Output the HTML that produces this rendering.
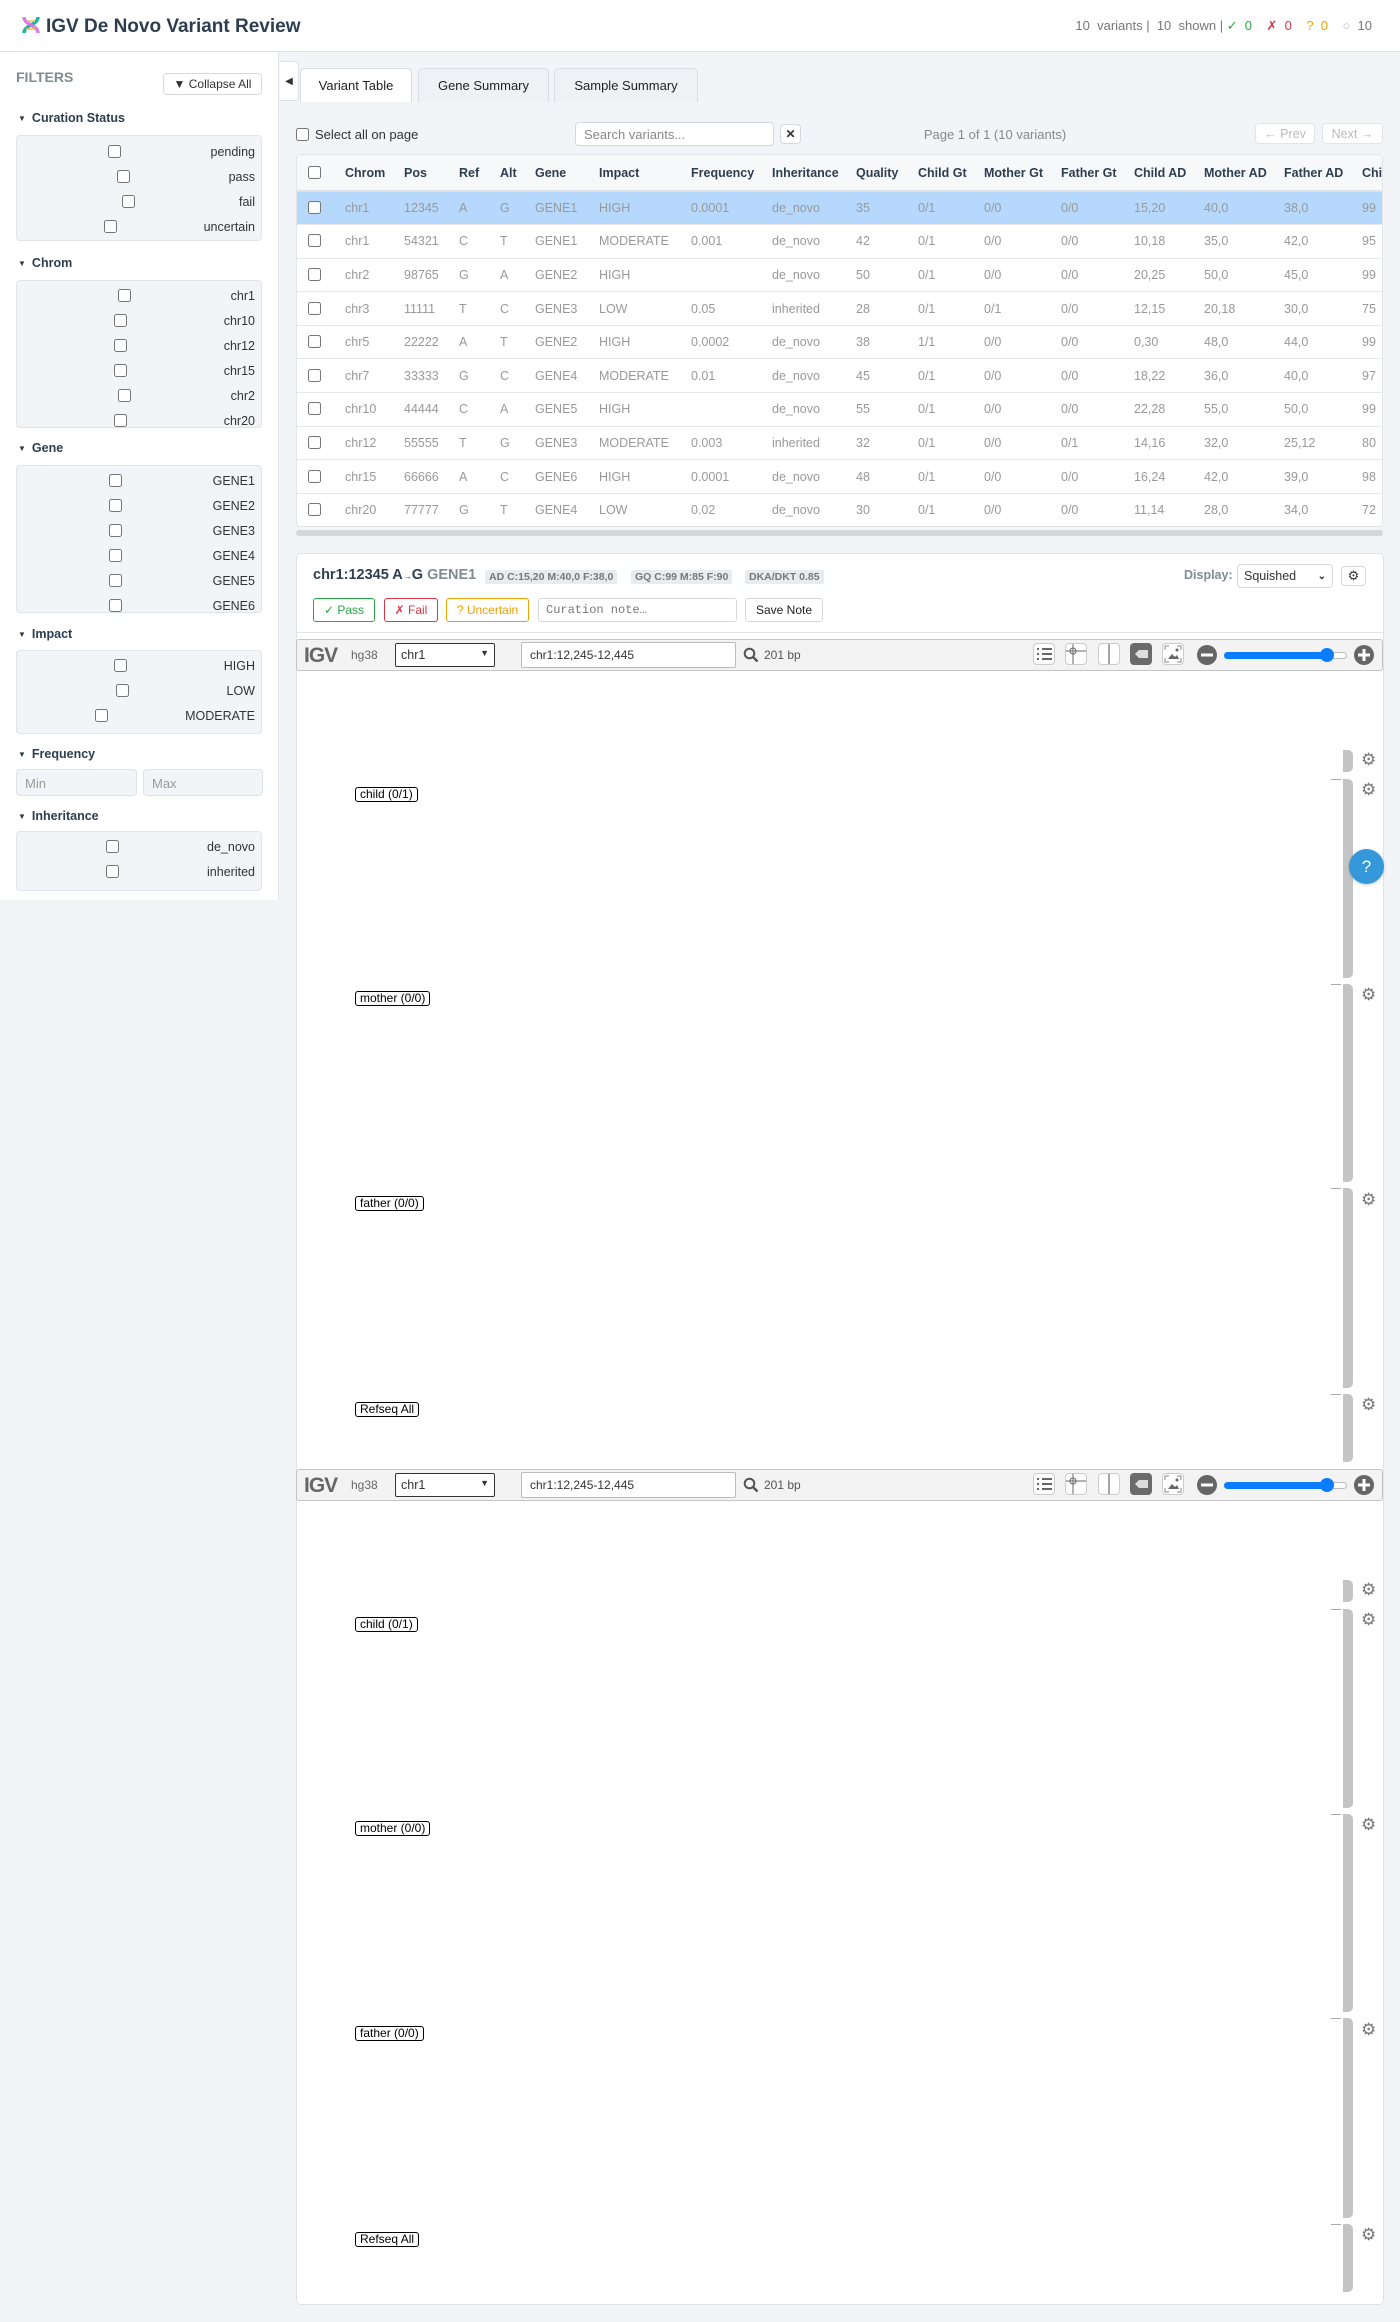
<!DOCTYPE html>
<html><head><meta charset="utf-8">
<style>
*{box-sizing:border-box}
body{margin:0;width:1400px;height:2322px;background:#f3f4f8;font-family:"Liberation Sans",Arial,sans-serif;color:#333;position:relative;overflow:hidden}
.abs{position:absolute}
#hdr{left:0;top:0;width:1400px;height:52px;background:#fff;border-bottom:1px solid #dde0e6}
#side{left:0;top:52px;width:279px;height:848px;background:#fff;border-right:1px solid #e2e4ea}
.h3{font-size:12.5px;font-weight:bold;color:#2c3e50;left:18px}
.h3:before{content:"▼";font-size:8px;margin-right:6px;position:relative;top:-1px}
.box{left:16px;width:246px;background:#f3f4f8;border:1px solid #e0e3e8;border-radius:4px;overflow:hidden}
.row{position:absolute;left:1px;right:6px;height:25px;display:flex;align-items:center;font-size:12.5px;color:#333}
.row input{margin:0 auto;width:13px;height:13px}
.inp{background:#f3f4f8;border:1px solid #dfe2e7;border-radius:4px;font-size:13px;color:#999;padding:6px 8px;height:27px}
.btn{background:#fff;border:1px solid #d5d8de;border-radius:4px;font-size:12.5px;display:flex;align-items:center;justify-content:center}
.tab{top:68px;height:34px;background:#f0f1f4;border:1px solid #d9dce2;border-bottom:none;border-radius:5px 5px 0 0;font-size:13px;color:#222;display:flex;align-items:center;justify-content:center}
table{border-collapse:collapse;table-layout:fixed;width:1145px;font-size:12.5px}
th{height:36px;text-align:left;font-weight:bold;color:#2c3e50;padding:0;background:#f7f8fa;border-bottom:2px solid #e0e2e6;white-space:nowrap}
td{height:33.6px;padding:0;color:#999;border-bottom:1px solid #e6e7ea;white-space:nowrap}
td input,th input{margin:0 0 0 11px;width:13px;height:13px;vertical-align:-2px}
tr.sel td{background:#b6d8fc}
.badge{top:570px;height:14px;background:#e9ecef;color:#777;font-size:10.5px;font-weight:bold;padding:0 4px;line-height:14px;border-radius:2px}
.cbtn{top:598px;height:24px;border-radius:3px;background:#fff;font-size:12px;display:flex;align-items:center;justify-content:center;border:1px solid}
.tb{height:32px;left:296px;width:1087px;background:#f3f3f3;border:1px solid #c4c4c4;border-radius:3px}
.ic{width:22px;height:22px;top:4px;border:1px solid #ccc;border-radius:4px;background:#fff}
.lbl{font-size:12px;color:#000;background:#fff;border:1px solid #000;border-radius:3px;padding:0 4px;line-height:13px;left:355px}
.bar{left:1343px;width:10px;background:#c4c4c4;border-radius:0 5px 5px 0}
.tick{left:1331px;width:10px;height:1px;background:#aaa}
.gear{left:1361px;font-size:17px;color:#777;line-height:17px}
</style></head><body>

<div id="hdr" class="abs">
  <svg class="abs" style="left:21px;top:15px" width="20" height="20" viewBox="0 0 20 20">
    <path d="M3 18 C3 10 17 10 17 2" stroke="#1fb5a8" stroke-width="3.5" fill="none"/>
    <path d="M3 2 C3 10 17 10 17 18" stroke="#d772e0" stroke-width="3.5" fill="none" opacity=".9"/>
    <path d="M6 6h8M5 14h9" stroke="#f3c34a" stroke-width="1.5"/>
  </svg>
  <div class="abs" style="left:46px;top:16px;font-size:19px;font-weight:bold;color:#2c3e50">IGV De Novo Variant Review</div>
  <div class="abs" style="right:28px;top:18px;font-size:13px;color:#777;white-space:pre">10  variants |  10  shown | <span style="color:#28a745">✓  0</span>    <span style="color:#dc3545">✗  0</span>    <span style="color:#f0a000">?  0</span>    <span style="color:#bbb">○</span>  10</div>
</div>

<div id="side" class="abs">
  <div class="abs" style="left:16px;top:17px;font-size:14px;font-weight:bold;color:#7f8c8d">FILTERS</div>
  <div class="abs btn" style="left:163px;top:21px;width:99px;height:22px;font-size:12px">▼ Collapse All</div>
</div>
<div class="abs h3" style="top:111px">Curation Status</div>
<div class="abs box" style="top:135px;height:106px">
  <div class="row" style="top:3px"><input type="checkbox"><span>pending</span></div>
  <div class="row" style="top:28px"><input type="checkbox"><span>pass</span></div>
  <div class="row" style="top:53px"><input type="checkbox"><span>fail</span></div>
  <div class="row" style="top:78px"><input type="checkbox"><span>uncertain</span></div>
</div>
<div class="abs h3" style="top:256px">Chrom</div>
<div class="abs box" style="top:280px;height:148px">
  <div class="row" style="top:2px"><input type="checkbox"><span>chr1</span></div>
  <div class="row" style="top:27px"><input type="checkbox"><span>chr10</span></div>
  <div class="row" style="top:52px"><input type="checkbox"><span>chr12</span></div>
  <div class="row" style="top:77px"><input type="checkbox"><span>chr15</span></div>
  <div class="row" style="top:102px"><input type="checkbox"><span>chr2</span></div>
  <div class="row" style="top:127px"><input type="checkbox"><span>chr20</span></div>
</div>
<div class="abs h3" style="top:441px">Gene</div>
<div class="abs box" style="top:465px;height:148px">
  <div class="row" style="top:2px"><input type="checkbox"><span>GENE1</span></div>
  <div class="row" style="top:27px"><input type="checkbox"><span>GENE2</span></div>
  <div class="row" style="top:52px"><input type="checkbox"><span>GENE3</span></div>
  <div class="row" style="top:77px"><input type="checkbox"><span>GENE4</span></div>
  <div class="row" style="top:102px"><input type="checkbox"><span>GENE5</span></div>
  <div class="row" style="top:127px"><input type="checkbox"><span>GENE6</span></div>
</div>
<div class="abs h3" style="top:627px">Impact</div>
<div class="abs box" style="top:650px;height:84px">
  <div class="row" style="top:2px"><input type="checkbox"><span>HIGH</span></div>
  <div class="row" style="top:27px"><input type="checkbox"><span>LOW</span></div>
  <div class="row" style="top:52px"><input type="checkbox"><span>MODERATE</span></div>
</div>
<div class="abs h3" style="top:747px">Frequency</div>
<div class="abs inp" style="left:16px;top:769px;width:121px">Min</div>
<div class="abs inp" style="left:143px;top:769px;width:120px">Max</div>
<div class="abs h3" style="top:809px">Inheritance</div>
<div class="abs box" style="top:831px;height:60px">
  <div class="row" style="top:2px"><input type="checkbox"><span>de_novo</span></div>
  <div class="row" style="top:27px"><input type="checkbox"><span>inherited</span></div>
</div>

<div class="abs" style="left:280px;top:61px;width:19px;height:40px;background:#fff;border:1px solid #dde0e6;border-left:none;border-radius:0 4px 4px 0;font-size:10px;display:flex;align-items:center;justify-content:center">◀</div>
<div class="abs tab" style="left:300px;width:112px;background:#fff">Variant Table</div>
<div class="abs tab" style="left:418px;width:131px">Gene Summary</div>
<div class="abs tab" style="left:554px;width:144px">Sample Summary</div>

<div class="abs" style="left:296px;top:127px;font-size:13px;display:flex;align-items:center"><input type="checkbox" style="margin:0 6px 0 0;width:13px;height:13px">Select all on page</div>
<div class="abs" style="left:575px;top:122px;width:199px;height:24px;background:#fff;border:1px solid #d5d8de;border-radius:4px;font-size:13px;color:#888;padding:4px 8px">Search variants...</div>
<div class="abs btn" style="left:780px;top:124px;width:21px;height:20px;font-size:12px;font-weight:bold">✕</div>
<div class="abs" style="left:850px;top:127px;width:290px;text-align:center;font-size:13px;color:#888">Page 1 of 1 (10 variants)</div>
<div class="abs btn" style="left:1255px;top:123px;width:60px;height:21px;color:#bbb;font-size:12.5px;border-color:#e2e4e8">← Prev</div>
<div class="abs btn" style="left:1322px;top:123px;width:61px;height:21px;color:#bbb;font-size:12.5px;border-color:#e2e4e8">Next →</div>

<div class="abs" style="left:296px;top:154px;width:1087px;height:373px;overflow:hidden;background:#fff;border:1px solid #e2e4e8;border-radius:4px">
<table>
<colgroup><col style="width:48px"><col style="width:59px"><col style="width:55px"><col style="width:41px"><col style="width:35px"><col style="width:64px"><col style="width:92px"><col style="width:81px"><col style="width:84px"><col style="width:62px"><col style="width:66px"><col style="width:77px"><col style="width:73px"><col style="width:70px"><col style="width:80px"><col style="width:78px"><col style="width:80px"></colgroup>
<tr><th><input type="checkbox"></th><th>Chrom</th><th>Pos</th><th>Ref</th><th>Alt</th><th>Gene</th><th>Impact</th><th>Frequency</th><th>Inheritance</th><th>Quality</th><th>Child Gt</th><th>Mother Gt</th><th>Father Gt</th><th>Child AD</th><th>Mother AD</th><th>Father AD</th><th>Child GQ</th></tr>
<tr class="sel"><td><input type="checkbox"></td><td>chr1</td><td>12345</td><td>A</td><td>G</td><td>GENE1</td><td>HIGH</td><td>0.0001</td><td>de_novo</td><td>35</td><td>0/1</td><td>0/0</td><td>0/0</td><td>15,20</td><td>40,0</td><td>38,0</td><td>99</td></tr>
<tr><td><input type="checkbox"></td><td>chr1</td><td>54321</td><td>C</td><td>T</td><td>GENE1</td><td>MODERATE</td><td>0.001</td><td>de_novo</td><td>42</td><td>0/1</td><td>0/0</td><td>0/0</td><td>10,18</td><td>35,0</td><td>42,0</td><td>95</td></tr>
<tr><td><input type="checkbox"></td><td>chr2</td><td>98765</td><td>G</td><td>A</td><td>GENE2</td><td>HIGH</td><td></td><td>de_novo</td><td>50</td><td>0/1</td><td>0/0</td><td>0/0</td><td>20,25</td><td>50,0</td><td>45,0</td><td>99</td></tr>
<tr><td><input type="checkbox"></td><td>chr3</td><td>11111</td><td>T</td><td>C</td><td>GENE3</td><td>LOW</td><td>0.05</td><td>inherited</td><td>28</td><td>0/1</td><td>0/1</td><td>0/0</td><td>12,15</td><td>20,18</td><td>30,0</td><td>75</td></tr>
<tr><td><input type="checkbox"></td><td>chr5</td><td>22222</td><td>A</td><td>T</td><td>GENE2</td><td>HIGH</td><td>0.0002</td><td>de_novo</td><td>38</td><td>1/1</td><td>0/0</td><td>0/0</td><td>0,30</td><td>48,0</td><td>44,0</td><td>99</td></tr>
<tr><td><input type="checkbox"></td><td>chr7</td><td>33333</td><td>G</td><td>C</td><td>GENE4</td><td>MODERATE</td><td>0.01</td><td>de_novo</td><td>45</td><td>0/1</td><td>0/0</td><td>0/0</td><td>18,22</td><td>36,0</td><td>40,0</td><td>97</td></tr>
<tr><td><input type="checkbox"></td><td>chr10</td><td>44444</td><td>C</td><td>A</td><td>GENE5</td><td>HIGH</td><td></td><td>de_novo</td><td>55</td><td>0/1</td><td>0/0</td><td>0/0</td><td>22,28</td><td>55,0</td><td>50,0</td><td>99</td></tr>
<tr><td><input type="checkbox"></td><td>chr12</td><td>55555</td><td>T</td><td>G</td><td>GENE3</td><td>MODERATE</td><td>0.003</td><td>inherited</td><td>32</td><td>0/1</td><td>0/0</td><td>0/1</td><td>14,16</td><td>32,0</td><td>25,12</td><td>80</td></tr>
<tr><td><input type="checkbox"></td><td>chr15</td><td>66666</td><td>A</td><td>C</td><td>GENE6</td><td>HIGH</td><td>0.0001</td><td>de_novo</td><td>48</td><td>0/1</td><td>0/0</td><td>0/0</td><td>16,24</td><td>42,0</td><td>39,0</td><td>98</td></tr>
<tr><td><input type="checkbox"></td><td>chr20</td><td>77777</td><td>G</td><td>T</td><td>GENE4</td><td>LOW</td><td>0.02</td><td>de_novo</td><td>30</td><td>0/1</td><td>0/0</td><td>0/0</td><td>11,14</td><td>28,0</td><td>34,0</td><td>72</td></tr>
</table>
</div>
<div class="abs" style="left:296px;top:530px;width:1087px;height:6px;background:#d4d6da;border-radius:3px"></div>

<div class="abs" style="left:296px;top:553px;width:1088px;height:1752px;background:#fff;border:1px solid #e0e2e6;border-radius:5px"></div>
<div class="abs" style="left:313px;top:567px;font-size:14.5px;font-weight:bold;color:#2c3e50">chr1:12345 A<span style="font-size:9px">→</span>G <span style="color:#7f8c8d">GENE1</span></div>
<div class="abs badge" style="left:485px">AD C:15,20 M:40,0 F:38,0</div>
<div class="abs badge" style="left:631px">GQ C:99 M:85 F:90</div>
<div class="abs badge" style="left:745px">DKA/DKT 0.85</div>
<div class="abs" style="left:1184px;top:568px;font-size:12.5px;font-weight:bold;color:#7f8c8d">Display:</div>
<div class="abs btn" style="left:1237px;top:564px;width:96px;height:24px;justify-content:space-between;padding:0 6px;font-size:12.5px"><span>Squished</span><span style="font-size:10px;font-weight:bold">⌄</span></div>
<div class="abs btn" style="left:1341px;top:566px;width:25px;height:20px;font-size:13px">⚙</div>
<div class="abs cbtn" style="left:313px;width:62px;color:#28a745;border-color:#28a745">✓ Pass</div>
<div class="abs cbtn" style="left:384px;width:54px;color:#dc3545;border-color:#dc3545">✗ Fail</div>
<div class="abs cbtn" style="left:446px;width:83px;color:#f0a000;border-color:#f0a000">? Uncertain</div>
<div class="abs" style="left:538px;top:598px;width:199px;height:24px;border:1px solid #d5d8de;border-radius:3px;font-family:'Liberation Mono',monospace;font-size:12px;color:#777;padding:4px 7px">Curation note…</div>
<div class="abs cbtn" style="left:745px;width:78px;color:#222;border-color:#d5d8de">Save Note</div>
<div class="abs" style="left:297px;top:632px;width:1086px;height:1px;background:#e3e5e9"></div>

<div class="abs" style="left:0;top:639px;width:1400px;height:831px">
  <div class="abs tb" style="top:0"></div>
  <div class="abs" style="left:304px;top:5px;font-size:21px;font-weight:bold;color:#666;letter-spacing:-1px">IGV</div>
  <div class="abs" style="left:351px;top:9px;font-size:12px;color:#666">hg38</div>
  <div class="abs" style="left:395px;top:4px;width:100px;height:24px;background:#fff;border:1px solid #333;border-radius:2px;font-size:12.5px;padding:4px 5px;display:flex;justify-content:space-between"><span>chr1</span><span style="font-size:9px;font-weight:bold">▼</span></div>
  <div class="abs" style="left:521px;top:3px;width:215px;height:26px;background:#fff;border:1px solid #bbb;border-radius:2px;font-size:12px;padding:5px 8px">chr1:12,245-12,445</div>
  <svg class="abs" style="left:743px;top:8px" width="16" height="16" viewBox="0 0 16 16"><circle cx="6.5" cy="6.5" r="4.8" stroke="#555" stroke-width="2" fill="none"/><path d="M10 10l4.5 4.5" stroke="#555" stroke-width="2.5"/></svg>
  <div class="abs" style="left:764px;top:9px;font-size:12px;color:#555">201 bp</div>
  <div class="abs ic" style="left:1033px"><svg width="20" height="20"><path d="M3 5h2M8 5h10M3 10h2M8 10h10M3 15h2M8 15h10" stroke="#666" stroke-width="2"/></svg></div>
  <div class="abs ic" style="left:1065px"><svg width="20" height="20"><path d="M7 0v20M0 7h20" stroke="#666" stroke-width="1"/><circle cx="7" cy="7" r="3" stroke="#666" fill="none"/></svg></div>
  <div class="abs ic" style="left:1098px"><svg width="20" height="20"><path d="M10 0v20" stroke="#888" stroke-width="1.5"/></svg></div>
  <div class="abs ic" style="left:1130px;background:#6b6b6b;border-color:#6b6b6b"><svg width="20" height="20"><path d="M4 10l4-4h9v8H8z" fill="#ddd"/></svg></div>
  <div class="abs ic" style="left:1162px"><svg width="20" height="20"><path d="M2 6V2h4M14 2h4v4M18 14v4h-4M6 18H2v-4" stroke="#888" fill="none"/><path d="M5 15l4-5 3 3 2-2 2 4z" fill="#666"/><circle cx="14" cy="6" r="1.5" fill="#666"/></svg></div>
  <svg class="abs" style="left:1197px;top:6px" width="20" height="20"><circle cx="10" cy="10" r="10" fill="#666"/><rect x="4" y="8.5" width="12" height="3" fill="#fff"/></svg>
  <div class="abs" style="left:1224px;top:13px;width:123px;height:7px;border:1px solid #bbb;border-radius:4px;background:#fff"></div>
  <div class="abs" style="left:1224px;top:13px;width:104px;height:7px;border-radius:4px;background:#0a7cff"></div>
  <div class="abs" style="left:1320px;top:9px;width:14px;height:14px;border-radius:7px;background:#0a7cff"></div>
  <svg class="abs" style="left:1354px;top:6px" width="20" height="20"><circle cx="10" cy="10" r="10" fill="#666"/><rect x="4" y="8.5" width="12" height="3" fill="#fff"/><rect x="8.5" y="4" width="3" height="12" fill="#fff"/></svg>

  <div class="abs bar" style="top:111px;height:22px"></div>
  <div class="abs gear" style="top:112px">⚙</div>
  <div class="abs tick" style="top:140px"></div><div class="abs bar" style="top:140px;height:199px"></div>
  <div class="abs gear" style="top:142px">⚙</div>
  <div class="abs lbl" style="top:148px">child (0/1)</div>
  <div class="abs tick" style="top:345px"></div><div class="abs bar" style="top:345px;height:198px"></div>
  <div class="abs gear" style="top:347px">⚙</div>
  <div class="abs lbl" style="top:352px">mother (0/0)</div>
  <div class="abs tick" style="top:549px"></div><div class="abs bar" style="top:549px;height:200px"></div>
  <div class="abs gear" style="top:552px">⚙</div>
  <div class="abs lbl" style="top:557px">father (0/0)</div>
  <div class="abs tick" style="top:755px"></div><div class="abs bar" style="top:755px;height:68px"></div>
  <div class="abs gear" style="top:757px">⚙</div>
  <div class="abs lbl" style="top:763px">Refseq All</div>
</div>

<div class="abs" style="left:0;top:1469px;width:1400px;height:831px">
  <div class="abs tb" style="top:0"></div>
  <div class="abs" style="left:304px;top:5px;font-size:21px;font-weight:bold;color:#666;letter-spacing:-1px">IGV</div>
  <div class="abs" style="left:351px;top:9px;font-size:12px;color:#666">hg38</div>
  <div class="abs" style="left:395px;top:4px;width:100px;height:24px;background:#fff;border:1px solid #333;border-radius:2px;font-size:12.5px;padding:4px 5px;display:flex;justify-content:space-between"><span>chr1</span><span style="font-size:9px;font-weight:bold">▼</span></div>
  <div class="abs" style="left:521px;top:3px;width:215px;height:26px;background:#fff;border:1px solid #bbb;border-radius:2px;font-size:12px;padding:5px 8px">chr1:12,245-12,445</div>
  <svg class="abs" style="left:743px;top:8px" width="16" height="16" viewBox="0 0 16 16"><circle cx="6.5" cy="6.5" r="4.8" stroke="#555" stroke-width="2" fill="none"/><path d="M10 10l4.5 4.5" stroke="#555" stroke-width="2.5"/></svg>
  <div class="abs" style="left:764px;top:9px;font-size:12px;color:#555">201 bp</div>
  <div class="abs ic" style="left:1033px"><svg width="20" height="20"><path d="M3 5h2M8 5h10M3 10h2M8 10h10M3 15h2M8 15h10" stroke="#666" stroke-width="2"/></svg></div>
  <div class="abs ic" style="left:1065px"><svg width="20" height="20"><path d="M7 0v20M0 7h20" stroke="#666" stroke-width="1"/><circle cx="7" cy="7" r="3" stroke="#666" fill="none"/></svg></div>
  <div class="abs ic" style="left:1098px"><svg width="20" height="20"><path d="M10 0v20" stroke="#888" stroke-width="1.5"/></svg></div>
  <div class="abs ic" style="left:1130px;background:#6b6b6b;border-color:#6b6b6b"><svg width="20" height="20"><path d="M4 10l4-4h9v8H8z" fill="#ddd"/></svg></div>
  <div class="abs ic" style="left:1162px"><svg width="20" height="20"><path d="M2 6V2h4M14 2h4v4M18 14v4h-4M6 18H2v-4" stroke="#888" fill="none"/><path d="M5 15l4-5 3 3 2-2 2 4z" fill="#666"/><circle cx="14" cy="6" r="1.5" fill="#666"/></svg></div>
  <svg class="abs" style="left:1197px;top:6px" width="20" height="20"><circle cx="10" cy="10" r="10" fill="#666"/><rect x="4" y="8.5" width="12" height="3" fill="#fff"/></svg>
  <div class="abs" style="left:1224px;top:13px;width:123px;height:7px;border:1px solid #bbb;border-radius:4px;background:#fff"></div>
  <div class="abs" style="left:1224px;top:13px;width:104px;height:7px;border-radius:4px;background:#0a7cff"></div>
  <div class="abs" style="left:1320px;top:9px;width:14px;height:14px;border-radius:7px;background:#0a7cff"></div>
  <svg class="abs" style="left:1354px;top:6px" width="20" height="20"><circle cx="10" cy="10" r="10" fill="#666"/><rect x="4" y="8.5" width="12" height="3" fill="#fff"/><rect x="8.5" y="4" width="3" height="12" fill="#fff"/></svg>

  <div class="abs bar" style="top:111px;height:22px"></div>
  <div class="abs gear" style="top:112px">⚙</div>
  <div class="abs tick" style="top:140px"></div><div class="abs bar" style="top:140px;height:199px"></div>
  <div class="abs gear" style="top:142px">⚙</div>
  <div class="abs lbl" style="top:148px">child (0/1)</div>
  <div class="abs tick" style="top:345px"></div><div class="abs bar" style="top:345px;height:198px"></div>
  <div class="abs gear" style="top:347px">⚙</div>
  <div class="abs lbl" style="top:352px">mother (0/0)</div>
  <div class="abs tick" style="top:549px"></div><div class="abs bar" style="top:549px;height:200px"></div>
  <div class="abs gear" style="top:552px">⚙</div>
  <div class="abs lbl" style="top:557px">father (0/0)</div>
  <div class="abs tick" style="top:755px"></div><div class="abs bar" style="top:755px;height:68px"></div>
  <div class="abs gear" style="top:757px">⚙</div>
  <div class="abs lbl" style="top:763px">Refseq All</div>
</div>

<div class="abs" style="left:1349px;top:849px;width:35px;height:35px;border-radius:50%;background:#3498db;color:#fff;font-size:17px;display:flex;align-items:center;justify-content:center;box-shadow:0 1px 3px rgba(0,0,0,.2)">?</div>
</body></html>
